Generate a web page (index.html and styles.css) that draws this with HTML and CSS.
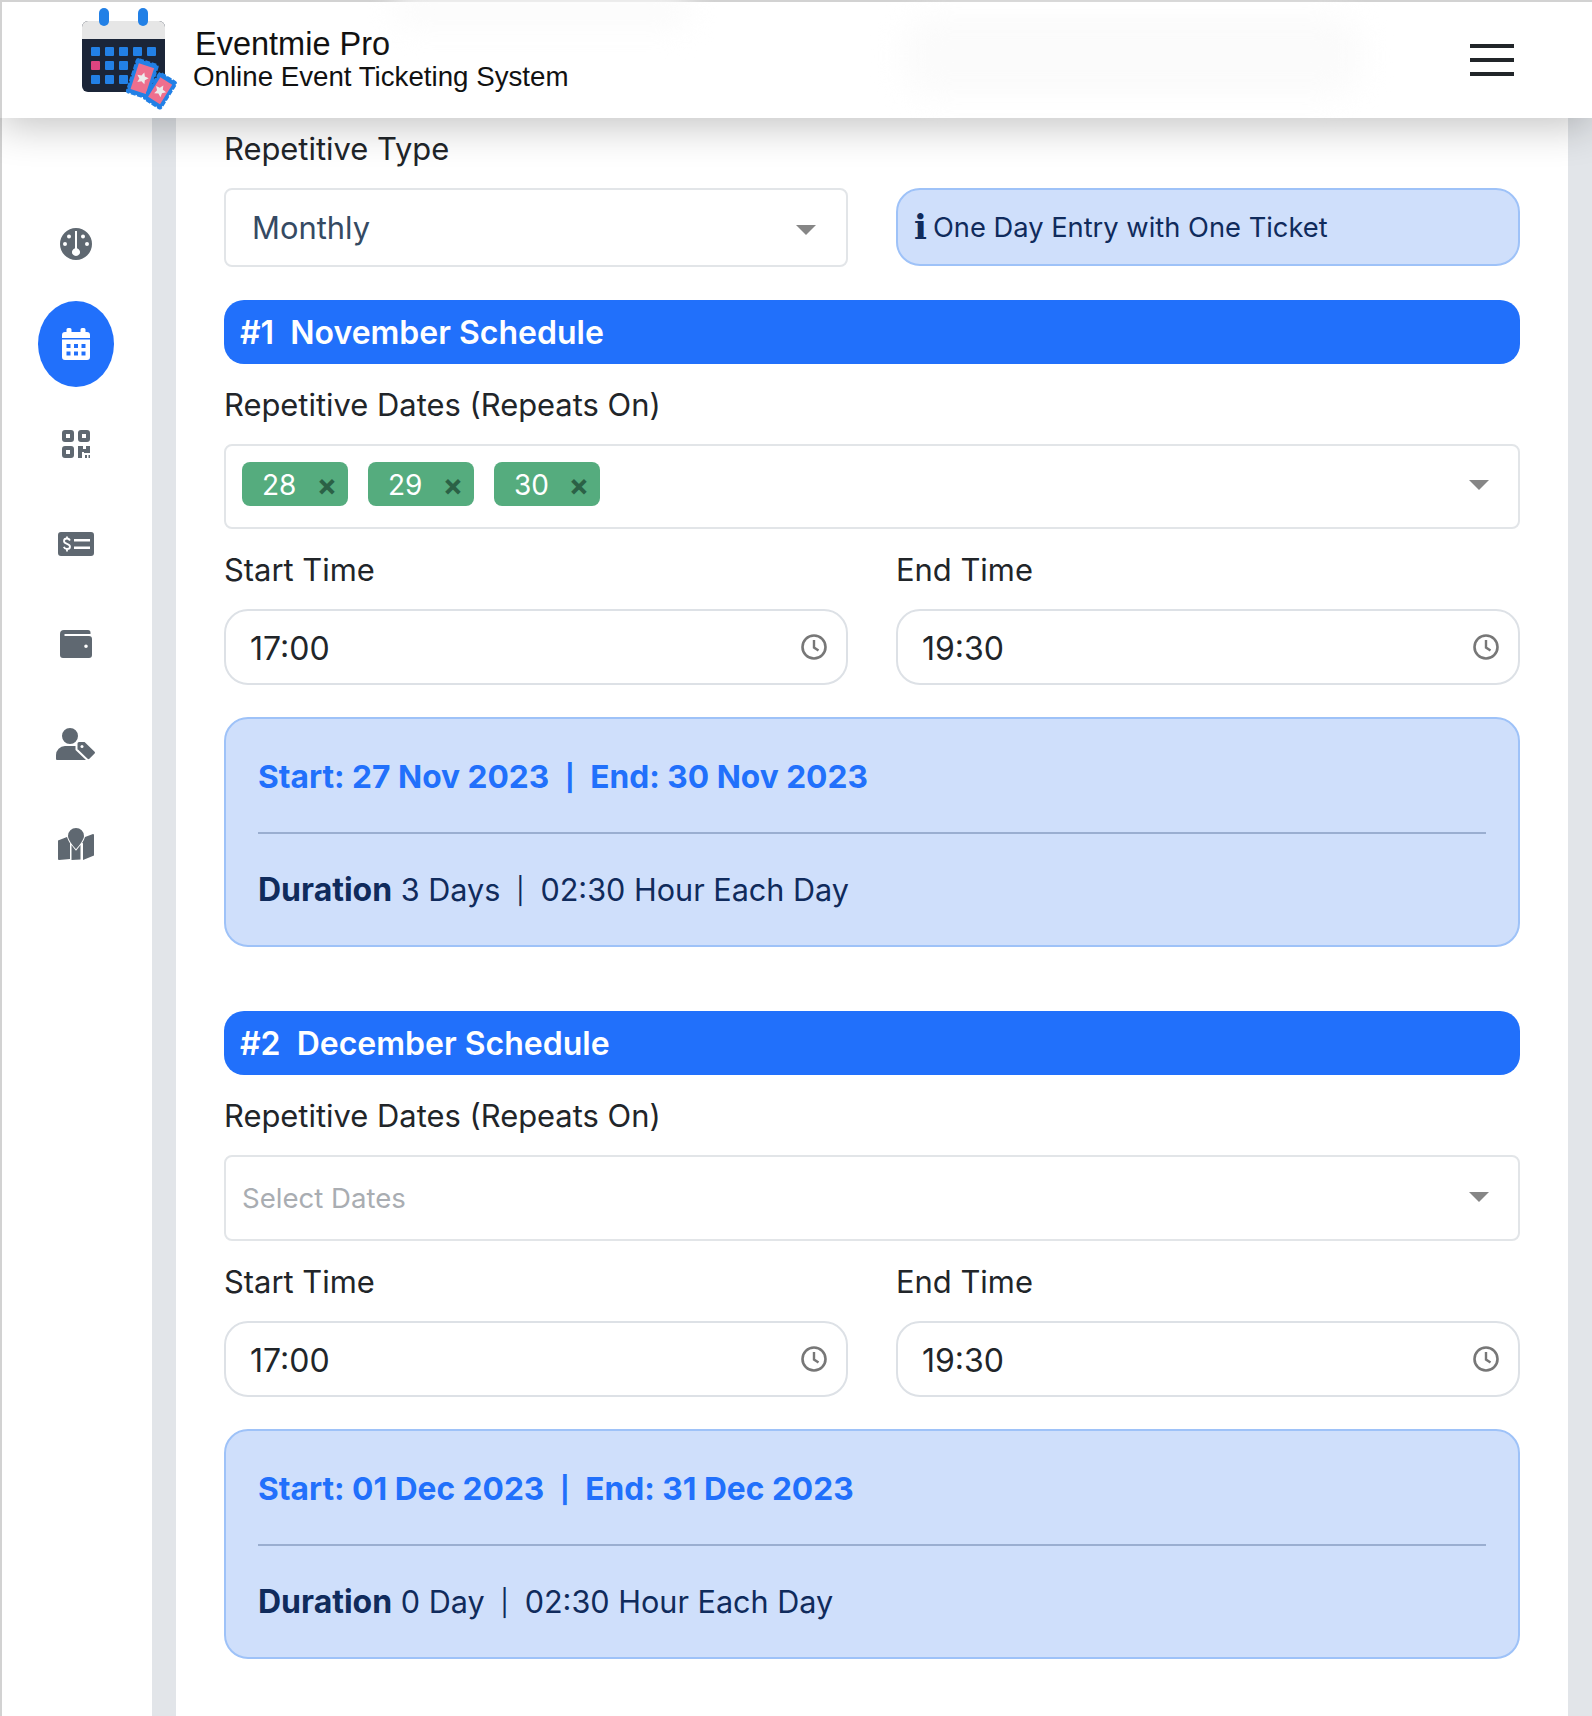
FILE: index.html
```html
<!DOCTYPE html>
<html>
<head>
  <meta charset="UTF-8">
  <title>Eventmie Pro</title>
  <link rel="stylesheet" href="styles.css">
</head>
<body>
  <header class="topbar">
    <svg class="logo" viewBox="80 6 100 104" width="100" height="104">
      <rect x="82" y="21" width="83" height="71" rx="6" fill="#1b2538"/>
      <path d="M82 39V27a6 6 0 0 1 6-6h71a6 6 0 0 1 6 6v12z" fill="#e6e6e6"/>
      <rect x="99" y="8" width="10" height="18" rx="5" fill="#2280e6"/>
      <rect x="138" y="8" width="10" height="18" rx="5" fill="#2280e6"/>
      <g fill="#2280e6">
        <rect x="91" y="47" width="9" height="9" rx="1"/><rect x="105" y="47" width="9" height="9" rx="1"/><rect x="119" y="47" width="9" height="9" rx="1"/><rect x="133" y="47" width="9" height="9" rx="1"/><rect x="147" y="47" width="9" height="9" rx="1"/>
        <rect x="105" y="61" width="9" height="9" rx="1"/><rect x="119" y="61" width="9" height="9" rx="1"/>
        <rect x="91" y="75" width="9" height="9" rx="1"/><rect x="105" y="75" width="9" height="9" rx="1"/><rect x="119" y="75" width="9" height="9" rx="1"/>
      </g>
      <rect x="91" y="61" width="9" height="9" rx="1" fill="#dc4480"/>
      <g transform="rotate(18 142 78)">
        <rect x="131.500" y="61" width="22" height="35" rx="2" fill="#2280e6" stroke="#2280e6" stroke-width="2" stroke-dasharray="5 1.500"/>
        <rect x="134.500" y="65" width="16" height="27" fill="#ee6f8e"/>
        <path d="M142.500 72l1.800 3.800 4.100.5-3 2.900.8 4.100-3.700-2-3.700 2 .8-4.100-3-2.900 4.100-.5z" fill="#ececec"/>
      </g>
      <g transform="rotate(32 160 90)">
        <rect x="150.500" y="75" width="20" height="31" rx="2" fill="#2280e6" stroke="#2280e6" stroke-width="2" stroke-dasharray="5 1.500"/>
        <rect x="153.500" y="79" width="14" height="23" fill="#ee6f8e"/>
        <path d="M160.500 84.500l1.800 3.800 4.100.5-3 2.900.8 4.100-3.700-2-3.700 2 .8-4.100-3-2.900 4.100-.5z" fill="#ececec"/>
      </g>
    </svg>
    <div class="brand">
      <div class="brand-name">Eventmie Pro</div>
      <div class="brand-sub">Online Event Ticketing System</div>
    </div>
    <div class="blur-text blur-left"></div>
    <div class="blur-text blur-right"></div>
    <button class="menu-btn"><span></span><span></span><span></span></button>
  </header>

  <div class="layout">
    <nav class="sidebar">
      <a class="nav-item">
        <svg width="32" height="32" viewBox="0 0 32 32"><path class="ico" fill-rule="evenodd" d="M16 0a16 16 0 1 1 0 32a16 16 0 1 1 0-32zM15 3v17.200a4 4 0 1 0 2 0V3zM9 6.500a2 2 0 1 0 0 4a2 2 0 1 0 0-4zM23 6.500a2 2 0 1 0 0 4a2 2 0 1 0 0-4zM5 14a2 2 0 1 0 0 4a2 2 0 1 0 0-4zM27 14a2 2 0 1 0 0 4a2 2 0 1 0 0-4z"/></svg>
      </a>
      <a class="nav-item">
        <span class="nav-pill">
          <svg width="28" height="32" viewBox="0 0 28 32"><path fill="#fff" fill-rule="evenodd" d="M6 0h2a1.500 1.500 0 0 1 1.500 1.500V4h9V1.500A1.500 1.500 0 0 1 20 0h2a1.500 1.500 0 0 1 1.500 1.500V4H25a3 3 0 0 1 3 3v3H0V7a3 3 0 0 1 3-3h1.500V1.500A1.500 1.500 0 0 1 6 0zM0 11.500h28V29a3 3 0 0 1-3 3H3a3 3 0 0 1-3-3zM4.500 16v4h4v-4zM12 16v4h4v-4zM19.500 16v4h4v-4zM4.500 23.500v4h4v-4zM12 23.500v4h4v-4zM19.500 23.500v4h4v-4z"/></svg>
        </span>
      </a>
      <a class="nav-item">
        <svg width="28" height="28" viewBox="0 0 28 28"><path class="ico" fill-rule="evenodd" d="M3 0h6a3 3 0 0 1 3 3v6a3 3 0 0 1-3 3H3a3 3 0 0 1-3-3V3a3 3 0 0 1 3-3zM4 4v4h4V4zM19 0h6a3 3 0 0 1 3 3v6a3 3 0 0 1-3 3h-6a3 3 0 0 1-3-3V3a3 3 0 0 1 3-3zM20 4v4h4V4zM3 16h6a3 3 0 0 1 3 3v6a3 3 0 0 1-3 3H3a3 3 0 0 1-3-3v-6a3 3 0 0 1 3-3zM4 20v4h4v-4zM16 16h5v3h3v-3h4v7h-6v-1h-2v6h-4zM23 25h2v3h-2zM26.500 25H28v3h-1.500z"/></svg>
      </a>
      <a class="nav-item">
        <svg width="36" height="24" viewBox="0 0 36 24"><path class="ico" fill-rule="evenodd" d="M3 0h30a3 3 0 0 1 3 3v18a3 3 0 0 1-3 3H3a3 3 0 0 1-3-3V3a3 3 0 0 1 3-3zM16 7v2.500h16V7zM16 14.500V17h16v-2.500z"/><path d="M9 4.500v2M9 17.500v2M12 8.500c-.5-1-1.500-2-3-2s-3 .8-3 2.500 1.500 2.300 3 2.800 3 1.200 3 2.900-1.500 2.300-3 2.300-2.700-1-3.200-2.200" fill="none" stroke="#fff" stroke-width="1.800"/></svg>
      </a>
      <a class="nav-item">
        <svg width="32" height="28" viewBox="0 0 32 28"><path class="ico" fill-rule="evenodd" d="M4 0h24a2.500 2.500 0 0 1 2.500 2.500V4H4.500v2H29a3 3 0 0 1 3 3v16a3 3 0 0 1-3 3H3a3 3 0 0 1-3-3V4a4 4 0 0 1 4-4zM26 14.500a1.800 1.800 0 1 0 0 3.600a1.800 1.800 0 1 0 0-3.600z"/></svg>
      </a>
      <a class="nav-item">
        <svg width="40" height="32" viewBox="0 0 40 32"><path class="ico" d="M14 0a8 8 0 1 1 0 16a8 8 0 1 1 0-16zM9 18h14l8 14H1a1 1 0 0 1-1-1v-4a9 9 0 0 1 9-9z"/><path class="ico" stroke="#fff" stroke-width="2" fill-rule="evenodd" d="M23 13h6l10.300 10a2.200 2.200 0 0 1 0 3.200l-5.200 5.300a2.200 2.200 0 0 1-3.200 0L20.500 21.500V15.500a2.500 2.500 0 0 1 2.500-2.500z"/><circle cx="26" cy="18.500" r="1.500" fill="#fff"/></svg>
      </a>
      <a class="nav-item">
        <svg width="36" height="32" viewBox="0 0 36 32"><path class="ico" d="M18 0a8 8 0 0 1 8 8c0 3.600-4.900 9.700-8 13.300C14.900 17.700 10 11.600 10 8a8 8 0 0 1 8-8zM0 12.500l9-3.500c.6 2 1.800 4.300 3 6.300V31L1 32a1 1 0 0 1-1-1zM24 15.300c1.200-2 2.400-4.300 3-6.300l8-3a1 1 0 0 1 1 1V27.500L25 32V15zM13.500 17c1.500 2.200 3.100 4.100 4.500 5.700 1.400-1.600 3-3.500 4.500-5.700v14.500l-9 .5z"/></svg>
      </a>
    </nav>

    <main class="content">
      <div class="two-col top-row">
        <div>
          <label class="field-label">Repetitive Type</label>
          <div class="select-box">
            <span>Monthly</span>
            <i class="caret"></i>
          </div>
        </div>
        <div class="alert-note"><b class="info-i">i</b> One Day Entry with One Ticket</div>
      </div>

      <h2 class="schedule-bar">#1&nbsp; November Schedule</h2>
      <label class="field-label">Repetitive Dates (Repeats On)</label>
      <div class="multi-box">
        <span class="tag">28 <em>×</em></span>
        <span class="tag">29 <em>×</em></span>
        <span class="tag">30 <em>×</em></span>
        <i class="caret"></i>
      </div>
      <div class="two-col">
        <div>
          <label class="field-label">Start Time</label>
          <div class="time-input">17:00
            <svg width="28" height="28" viewBox="0 0 28 28"><circle cx="14" cy="14" r="11.500" fill="none" stroke="#777" stroke-width="2.600"/><path d="M14 7v7.500l4.500 3" fill="none" stroke="#777" stroke-width="2.400"/></svg>
          </div>
        </div>
        <div>
          <label class="field-label">End Time</label>
          <div class="time-input">19:30
            <svg width="28" height="28" viewBox="0 0 28 28"><circle cx="14" cy="14" r="11.500" fill="none" stroke="#777" stroke-width="2.600"/><path d="M14 7v7.500l4.500 3" fill="none" stroke="#777" stroke-width="2.400"/></svg>
          </div>
        </div>
      </div>
      <div class="summary">
        <div class="summary-dates">Start: 27 Nov 2023<span class="sep">|</span>End: 30 Nov 2023</div>
        <hr>
        <div class="summary-length"><b>Duration</b> 3 Days<span class="sep">|</span>02:30 Hour Each Day</div>
      </div>

      <h2 class="schedule-bar second">#2&nbsp; December Schedule</h2>
      <label class="field-label">Repetitive Dates (Repeats On)</label>
      <div class="multi-box empty">
        <span class="placeholder">Select Dates</span>
        <i class="caret"></i>
      </div>
      <div class="two-col">
        <div>
          <label class="field-label">Start Time</label>
          <div class="time-input">17:00
            <svg width="28" height="28" viewBox="0 0 28 28"><circle cx="14" cy="14" r="11.500" fill="none" stroke="#777" stroke-width="2.600"/><path d="M14 7v7.500l4.500 3" fill="none" stroke="#777" stroke-width="2.400"/></svg>
          </div>
        </div>
        <div>
          <label class="field-label">End Time</label>
          <div class="time-input">19:30
            <svg width="28" height="28" viewBox="0 0 28 28"><circle cx="14" cy="14" r="11.500" fill="none" stroke="#777" stroke-width="2.600"/><path d="M14 7v7.500l4.500 3" fill="none" stroke="#777" stroke-width="2.400"/></svg>
          </div>
        </div>
      </div>
      <div class="summary">
        <div class="summary-dates">Start: 01 Dec 2023<span class="sep">|</span>End: 31 Dec 2023</div>
        <hr>
        <div class="summary-length"><b>Duration</b> 0 Day<span class="sep">|</span>02:30 Hour Each Day</div>
      </div>
    </main>
  </div>
</body>
</html>
```

FILE: styles.css
```css
* {
  box-sizing: border-box;
}
html, body {
  margin: 0;
  height: 100%;
}
body {
  font-family: Inter, "Liberation Sans", sans-serif;
  font-size: 30.900px;
  color: #212529;
  background: #e2e5e9;
  display: flex;
  flex-direction: column;
  height: 1716px;
  overflow: hidden;
}

/* top bar */
.topbar {
  position: relative;
  z-index: 2;
  flex: none;
  height: 118px;
  display: flex;
  align-items: flex-start;
  padding: 4px 78px 0 78px;
  background: #fff;
  border-top: 2px solid #d2d2d2;
  border-left: 2px solid #d2d2d2;
  box-shadow: 0 8px 40px rgba(0,0,0,0.24);
}
.logo {
  flex: none;
}
.brand {
  margin-left: 13px;
  font-family: "Liberation Sans", Arial, sans-serif;
  color: #111;
  padding-top: 20px;
}
.brand-name {
  font-size: 32.500px;
  line-height: 37px;
  margin-left: 2px;
}
.brand-sub {
  font-size: 27.700px;
  line-height: 27px;
}
.blur-text {
  position: absolute;
  background: #fbfbfb;
  border-radius: 30px;
  filter: blur(14px);
}
.blur-left {
  left: 390px;
  top: -6px;
  width: 300px;
  height: 32px;
}
.blur-right {
  left: 900px;
  top: 14px;
  width: 460px;
  height: 80px;
}
.menu-btn {
  position: relative;
  margin-left: auto;
  margin-top: 38px;
  width: 44px;
  height: 32px;
  padding: 0;
  border: none;
  background: none;
  display: flex;
  flex-direction: column;
  justify-content: space-between;
}
.menu-btn span {
  display: block;
  height: 4px;
  background: #212529;
}

/* page columns */
.layout {
  flex: 1;
  display: flex;
  padding-right: 24px;
}
.sidebar {
  flex: none;
  width: 152px;
  padding: 76px 2px 0 0;
  background: #fff;
  border-left: 2px solid #d2d2d2;
}
.nav-item {
  height: 100px;
  display: flex;
  align-items: center;
  justify-content: center;
}
.nav-pill {
  width: 76px;
  height: 86px;
  border-radius: 50%;
  background: #2170fb;
  display: flex;
  align-items: center;
  justify-content: center;
}
.ico {
  fill: #5f6871;
}
.content {
  flex: 1;
  margin-left: 24px;
  padding: 10px 48px 0 48px;
  background: #fff;
}

/* form bits */
.two-col {
  display: grid;
  grid-template-columns: 1fr 1fr;
  column-gap: 48px;
  align-items: start;
}
.field-label {
  display: block;
  line-height: 42px;
  margin: 20px 0 18px;
}
.top-row .field-label {
  margin-top: 0;
}
.select-box {
  height: 79px;
  display: flex;
  align-items: center;
  justify-content: space-between;
  padding: 0 30px 0 26px;
  border: 2px solid #e2e5e8;
  border-radius: 8px;
  color: #354a63;
}
.caret {
  width: 0;
  height: 0;
  border-left: 10px solid transparent;
  border-right: 10px solid transparent;
  border-top: 10px solid #868686;
}
.select-box .caret {
  margin-top: 4px;
}
.alert-note {
  margin-top: 60px;
  height: 78px;
  display: flex;
  align-items: center;
  padding-left: 16px;
  background: #cfdffb;
  border: 2px solid #9ec2f8;
  border-radius: 24px;
  color: #102b5c;
  font-size: 27.300px;
}
.info-i {
  font-family: "DejaVu Serif", serif;
  font-size: 34px;
  margin-right: 6px;
}
.schedule-bar {
  height: 64px;
  margin: 33px 0 0;
  padding-left: 16px;
  display: flex;
  align-items: center;
  background: #2170fb;
  border-radius: 20px;
  color: #fff;
  font-size: 32px;
  font-weight: 600;
}
.schedule-bar.second {
  margin-top: 64px;
}
.multi-box {
  height: 85px;
  display: flex;
  align-items: center;
  gap: 20px;
  padding: 0 29px 6px 16px;
  border: 2px solid #e2e5e8;
  border-radius: 8px;
}
.multi-box.empty {
  height: 86px;
}
.multi-box .caret {
  margin-left: auto;
  margin-top: 3px;
}
.tag {
  width: 106px;
  height: 44px;
  display: flex;
  align-items: center;
  justify-content: space-between;
  padding: 2px 11px 0 20px;
  background: #55ac7e;
  border-radius: 8px;
  color: #fff;
  font-size: 28px;
}
.tag em {
  font-style: normal;
  font-weight: 700;
  font-size: 30px;
  color: #2b6146;
}
.placeholder {
  font-size: 27.600px;
  color: #a9adb2;
  margin-top: 6px;
}
.time-input {
  height: 76px;
  display: flex;
  align-items: center;
  justify-content: space-between;
  padding: 2px 18px 0 24px;
  border: 2px solid #dde1e6;
  border-radius: 24px;
  font-size: 32px;
}
.time-input svg {
  margin-top: -3px;
}
.summary {
  margin-top: 32px;
  height: 230px;
  padding: 36px 32px 0;
  background: #cfdffb;
  border: 2px solid #9ec2f8;
  border-radius: 24px;
  color: #102b5c;
  font-size: 30.600px;
}
.summary-dates {
  line-height: 44px;
  font-size: 31.700px;
  font-weight: 700;
  color: #2170fb;
}
.summary hr {
  margin: 32px 0 34px;
  border: none;
  border-top: 2px solid #9aaed0;
}
.summary-length {
  line-height: 44px;
}
.summary-length b {
  font-size: 32px;
}
.sep {
  display: inline-block;
  width: 41px;
  text-align: center;
  font-size: 26px;
  vertical-align: 1px;
}
.summary-length .sep {
  width: 40px;
  font-weight: 400;
}
```
